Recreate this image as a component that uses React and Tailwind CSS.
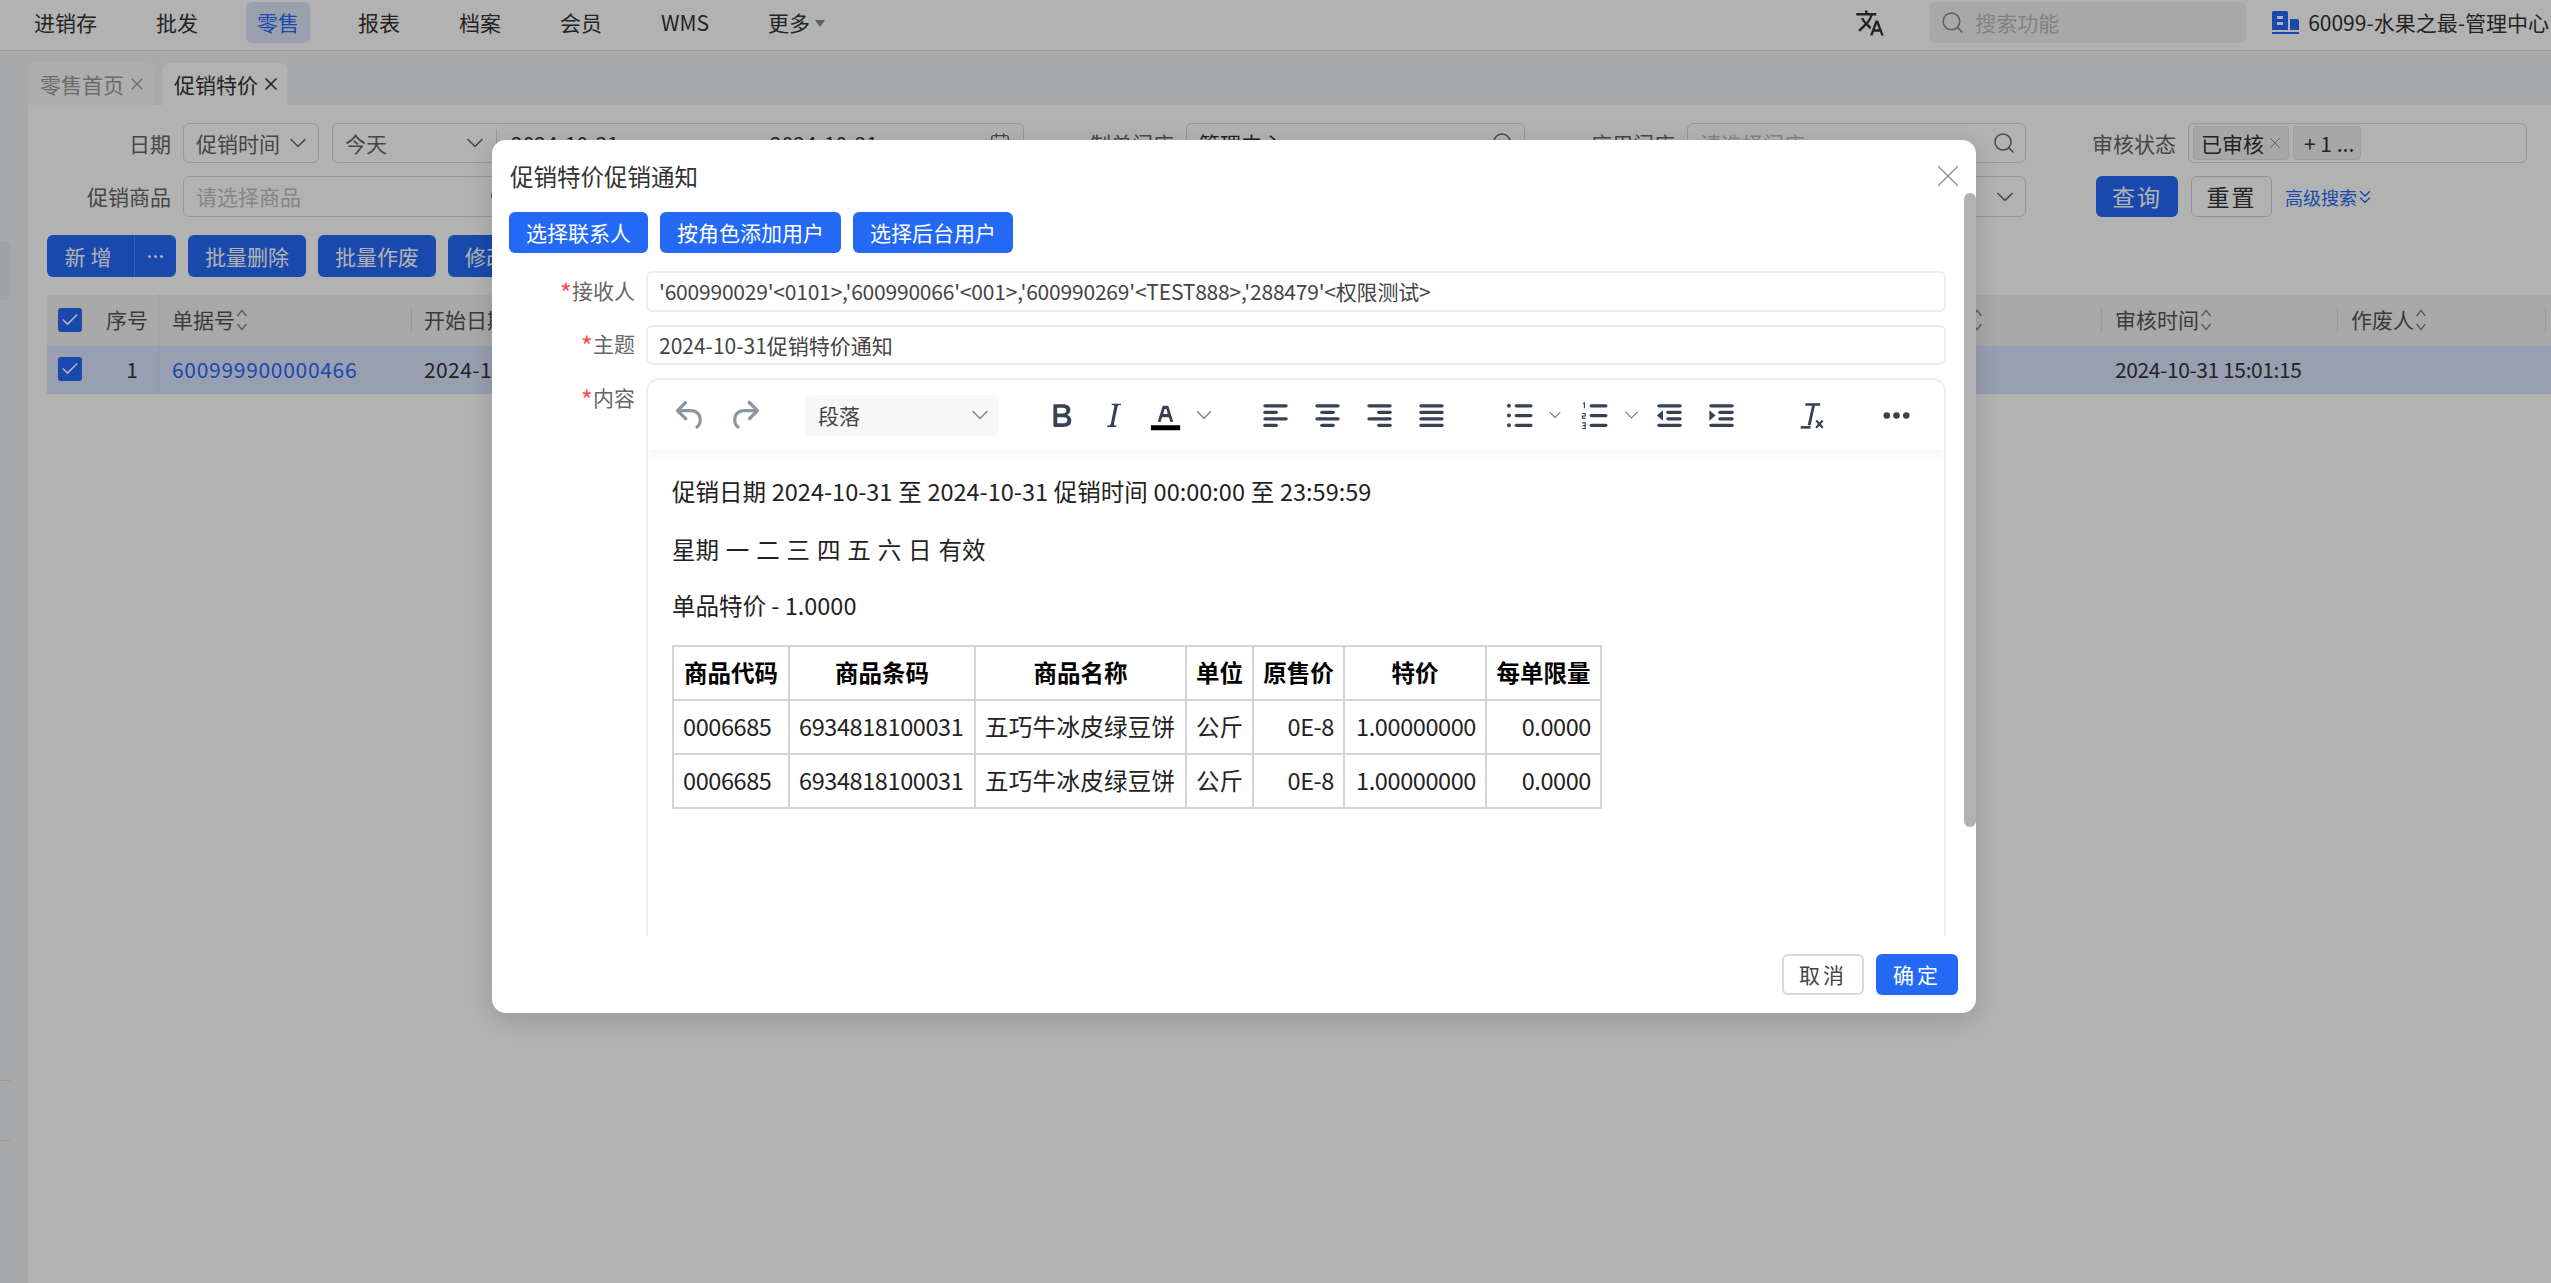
import React from 'react';
import { ChevronDown, Search, X, Check, Calendar, ChevronsDown } from 'lucide-react';
import { MdTranslate } from 'react-icons/md';

const navItems = ['进销存', '批发', '零售', '报表', '档案', '会员', 'WMS', '更多'];

const SortIcon = () => (
  <svg width="14" height="26" viewBox="0 0 14 26" fill="none" stroke="#8c8c8c" strokeWidth="1.6" className="shrink-0">
    <path d="M2.5 9 7 3.5 11.500 9" />
    <path d="M2.500 17 7 22.500 11.500 17" />
  </svg>
);

const CheckBox = () => (
  <span className="flex h-[24px] w-[24px] items-center justify-center rounded-[3px] bg-[#2469f6]">
    <Check size={20} strokeWidth={2} className="text-white" />
  </span>
);

const FilterLabel = ({ w, children }) => (
  <span className={`${w} mr-[12px] shrink-0 text-right text-[#666]`}>{children}</span>
);

const TinyIcon = ({ children, color = '#374151' }) => (
  <svg width="39" height="39" viewBox="0 0 24 24" fill={color}>{children}</svg>
);

const Tool = ({ className = 'w-[52px]', children }) => (
  <span className={`flex h-[41px] shrink-0 items-center justify-center ${className}`}>{children}</span>
);

const ToolChevron = ({ className }) => (
  <span className={`flex shrink-0 items-center justify-center ${className}`}>
    <ChevronDown size={28} strokeWidth={1.3} className="text-[#7b8490]" />
  </span>
);

const Lines = ({ rows }) => (
  <TinyIcon>
    {rows.map(([x, w], i) => (
      <rect key={i} x={x} y={5 + i * 4} width={w} height="2" rx="1" />
    ))}
  </TinyIcon>
);

const modalButtons = ['选择联系人', '按角色添加用户', '选择后台用户'];

const heads = ['商品代码', '商品条码', '商品名称', '单位', '原售价', '特价', '每单限量'];
const row = ['0006685', '6934818100031', '五巧牛冰皮绿豆饼', '公斤', '0E-8', '1.00000000', '0.0000'];
const cellStyle = [
  'text-left tracking-[-0.4px]',
  'text-left tracking-[-0.4px]',
  'text-left tracking-[0.3px]',
  'text-left',
  'text-right tracking-[-0.4px]',
  'text-right tracking-[-0.4px]',
  'text-right tracking-[-0.4px]',
];
const colWidths = ['w-[116px]', 'w-[186px]', 'w-[211px]', 'w-[67px]', 'w-[91px]', 'w-[142px]', 'w-[115px]'];

const FormLabel = ({ className = '', children }) => (
  <span className={`w-[143px] shrink-0 text-right text-[#666] ${className}`}>
    <span className="align-[-4px] text-[26px] leading-none text-[#ff4d4f]">*</span>
    {children}
  </span>
);

const App = () => {
  return (
    <div className="relative h-screen w-full overflow-hidden bg-white font-['Noto_Sans_CJK_SC','Noto_Sans',sans-serif] text-[21px] leading-none text-[#333]">
      {/* top bar */}
      <header className="flex h-[51px] items-center border-b border-[#dcdcdc] bg-white pb-[5px] pl-[23px]">
        <nav className="flex items-center gap-[37px]">
          {navItems.map((n) => (
            <span
              key={n}
              className={
                n === '零售'
                  ? 'flex h-[41px] items-center rounded-[6px] bg-[#dde6f8] px-[11px] text-[#2469f6]'
                  : 'flex h-[41px] items-center px-[11px]'
              }
            >
              {n}
              {n === '更多' && <span className="ml-[5px] mt-[1px] h-0 w-0 border-x-[5px] border-t-[7px] border-x-transparent border-t-[#888]" />}
            </span>
          ))}
        </nav>
        <div className="ml-auto flex items-center">
          <MdTranslate size={30} className="mr-[44px] text-[#333]" />
          <div className="flex h-[41px] w-[317px] items-center rounded-[6px] bg-[#f1f1f1] pl-[11px]">
            <Search size={25} strokeWidth={1.5} className="text-[#888]" />
            <span className="ml-[10px] text-[#bbb]">搜索功能</span>
          </div>
          <svg width="27" height="23" viewBox="0 0 27 23" className="ml-[26px]" fill="#2469f6">
            <path d="M0 1.500A1.500 1.500 0 0 1 1.500 0h13A1.500 1.500 0 0 1 16 1.500V19H0Z" />
            <path d="M18 8h7a2 2 0 0 1 2 2v9h-9Z" />
            <rect x="0" y="21" width="27" height="2" />
            <rect x="5" y="5" width="6" height="3" fill="#fff" />
            <rect x="5" y="11" width="6" height="3" fill="#fff" />
          </svg>
          <span className="ml-[9px] mr-[2px] whitespace-nowrap">60099-水果之最-管理中心</span>
        </div>
      </header>

      <div className="flex h-[1232px]">
        <aside className="flex w-[28px] shrink-0 flex-col bg-[#f0f2f5]">
          <div className="mt-[190px] h-[59px] w-[10px] rounded-r-[6px] bg-[#e6e8ec]" />
          <div className="mt-[780px] h-[1px] w-[10px] bg-[#dcdcdc]" />
          <div className="mt-[59px] h-[1px] w-[10px] bg-[#dcdcdc]" />
        </aside>

        <main className="flex min-w-0 flex-1 flex-col">
          {/* tabs */}
          <div className="flex h-[54px] shrink-0 items-end gap-[10px] bg-[#f0f2f5]">
            <div className="flex h-[42px] w-[125px] items-center rounded-t-[6px] bg-[#fafafa] pl-[12px] text-[#999]">
              零售首页<X size={20} strokeWidth={1.5} className="ml-[3px] shrink-0" />
            </div>
            <div className="flex h-[42px] w-[124px] items-center rounded-t-[6px] bg-white pl-[11px]">
              促销特价<X size={20} strokeWidth={2} className="ml-[3px] shrink-0" />
            </div>
          </div>

          {/* filters */}
          <div className="flex flex-col pt-[18px]">
            <div className="flex h-[40px] items-center">
              <FilterLabel w="w-[143px]">日期</FilterLabel>
              <div className="flex h-[40px] w-[136px] items-center justify-between rounded-[6px] border border-[#d9d9d9] pl-[12px] pr-[6px] text-[#666]">
                促销时间<ChevronDown size={28} strokeWidth={1.4} className="shrink-0" />
              </div>
              <div className="ml-[13px] flex h-[40px] w-[692px] items-center rounded-[6px] border border-[#d9d9d9]">
                <div className="flex h-[28px] w-[164px] items-center justify-between border-r border-[#d9d9d9] pl-[12px] pr-[7px] text-[#666]">
                  今天<ChevronDown size={28} strokeWidth={1.4} className="shrink-0" />
                </div>
                <span className="ml-[14px] w-[259px]">2024-10-31</span>
                <span>2024-10-31</span>
                <Calendar size={22} strokeWidth={1.5} className="ml-auto mr-[12px] text-[#666]" />
              </div>
              <FilterLabel w="w-[150px]">制单门店</FilterLabel>
              <div className="flex h-[40px] w-[339px] items-center justify-between rounded-[6px] border border-[#d9d9d9] pl-[12px] pr-[9px]">
                管理中心<Search size={24} strokeWidth={1.5} className="text-[#666]" />
              </div>
              <FilterLabel w="w-[150px]">应用门店</FilterLabel>
              <div className="flex h-[40px] w-[339px] items-center justify-between rounded-[6px] border border-[#d9d9d9] pl-[12px] pr-[9px] text-[#bfbfbf]">
                请选择门店<Search size={24} strokeWidth={1.5} className="text-[#666]" />
              </div>
              <FilterLabel w="w-[150px]">审核状态</FilterLabel>
              <div className="flex h-[40px] w-[339px] items-center gap-[4px] rounded-[6px] border border-[#d9d9d9] pl-[4px]">
                <span className="flex h-[34px] w-[96px] items-center rounded-[4px] border border-[#e3e3e3] bg-[#f0f0f0] pl-[7px]">
                  已审核<X size={18} strokeWidth={1.2} className="ml-[2px] shrink-0 text-[#888]" />
                </span>
                <span className="flex h-[34px] w-[68px] items-center whitespace-nowrap rounded-[4px] border border-[#e3e3e3] bg-[#f0f0f0] pl-[10px]">+ 1 ...</span>
              </div>
            </div>

            <div className="mt-[13px] flex h-[41px] items-center">
              <FilterLabel w="w-[143px]">促销商品</FilterLabel>
              <div className="flex h-[41px] w-[340px] items-center justify-between rounded-[6px] border border-[#d9d9d9] pl-[12px] pr-[9px] text-[#bfbfbf]">
                请选择商品<Search size={24} strokeWidth={1.5} className="text-[#666]" />
              </div>
              <div className="ml-[1164px] flex h-[41px] w-[339px] items-center justify-end rounded-[6px] border border-[#d9d9d9] pr-[6px]">
                <ChevronDown size={28} strokeWidth={1.4} className="text-[#666]" />
              </div>
              <button className="ml-[70px] h-[41px] w-[82px] rounded-[6px] bg-[#2469f6] text-[23px] tracking-[2px] text-white">查询</button>
              <button className="ml-[13px] h-[41px] w-[81px] rounded-[6px] border border-[#d0d0d0] text-[23px] tracking-[2px]">重置</button>
              <span className="ml-[13px] flex items-center text-[18px] text-[#2469f6]">
                高级搜索<ChevronsDown size={22} strokeWidth={1.5} className="-ml-[3px]" />
              </span>
            </div>

            {/* actions */}
            <div className="mt-[18px] flex h-[42px] items-center gap-[12px] pl-[19px]">
              <div className="flex h-[42px] w-[129px] shrink-0 items-center rounded-[6px] bg-[#2469f6] text-white">
                <span className="w-[87px] shrink-0 text-center tracking-[5px]">新增</span>
                <span className="flex h-full flex-1 items-center justify-center gap-[3px] border-l border-[#4d85f8]">
                  <span className="h-[3px] w-[3px] rounded-full bg-white" />
                  <span className="h-[3px] w-[3px] rounded-full bg-white" />
                  <span className="h-[3px] w-[3px] rounded-full bg-white" />
                </span>
              </div>
              <button className="h-[42px] w-[118px] rounded-[6px] bg-[#2469f6] text-white">批量删除</button>
              <button className="h-[42px] w-[118px] rounded-[6px] bg-[#2469f6] text-white">批量作废</button>
              <button className="h-[42px] w-[118px] rounded-[6px] bg-[#2469f6] pl-[17px] text-left text-white">修改</button>
            </div>

            {/* list table */}
            <div className="ml-[19px] mt-[18px] text-[#555]">
              <div className="flex h-[51px] items-center bg-[#f2f2f2] pb-[2px]">
                <div className="flex w-[47px] shrink-0 items-center pl-[11px]"><CheckBox /></div>
                <div className="flex h-[51px] w-[65px] shrink-0 items-center border-r border-[#e6e6e6] pl-[12px]">
                  序号
                </div>
                <div className="flex h-[26px] w-[253px] shrink-0 items-center border-r border-[#dcdcdc] pl-[13px]">
                  单据号<SortIcon />
                </div>
                <div className="flex h-[26px] w-[1690px] shrink-0 items-center border-r border-[#dcdcdc] pl-[12px]">
                  开始日期<SortIcon />
                  <span className="ml-auto mr-[117px]"><SortIcon /></span>
                </div>
                <div className="flex h-[26px] w-[236px] shrink-0 items-center border-r border-[#dcdcdc] pl-[13px]">
                  审核时间<SortIcon />
                </div>
                <div className="flex h-[26px] w-[208px] shrink-0 items-center border-r border-[#dcdcdc] pl-[13px]">
                  作废人<SortIcon />
                </div>
              </div>
              <div className="flex h-[48px] items-center bg-[#d9e4fe] pb-[2px] text-[#333]">
                <div className="flex w-[47px] shrink-0 items-center pl-[11px]"><CheckBox /></div>
                <div className="flex h-[48px] w-[65px] shrink-0 items-center justify-center border-r border-[#cfdaf3] pl-[12px]">1</div>
                <div className="w-[253px] shrink-0 pl-[13px] tracking-[0.7px] text-[#2469f6]">600999900000466</div>
                <div className="w-[1690px] shrink-0 pl-[12px] tracking-[0.4px]">2024-10-31</div>
                <div className="w-[236px] shrink-0 whitespace-nowrap pl-[13px] tracking-[-0.4px]">2024-10-31 15:01:15</div>
              </div>
            </div>
          </div>
        </main>
      </div>

      {/* mask */}
      <div className="absolute inset-0 bg-black/30" />

      {/* dialog */}
      <div className="absolute left-[492px] top-[140px] flex h-[873px] w-[1484px] flex-col rounded-[14px] bg-white shadow-[0_6px_24px_rgba(0,0,0,0.15)]">
        <div className="flex h-[72px] shrink-0 items-center justify-between pl-[18px] pr-[9px]">
          <span className="pt-[2px] text-[23.5px] text-[#333]">促销特价促销通知</span>
          <X size={38} strokeWidth={0.7} className="text-[#888]" />
        </div>

        <div className="flex h-[41px] shrink-0 gap-[12px] pl-[17px]">
          {modalButtons.map((b) => (
            <button key={b} className="h-[41px] rounded-[6px] bg-[#2469f6] px-[17px] text-white">{b}</button>
          ))}
        </div>

        <div className="mt-[18px] flex h-[41px] shrink-0 items-center">
          <FormLabel>接收人</FormLabel>
          <div className="ml-[11px] flex h-[41px] w-[1300px] items-center rounded-[6px] border-2 border-[#ececec] pl-[11px] tracking-[-0.2px] text-[#444]">
            '600990029'&lt;0101&gt;,'600990066'&lt;001&gt;,'600990269'&lt;TEST888&gt;,'288479'&lt;权限测试&gt;
          </div>
        </div>
        <div className="mt-[13px] flex h-[40px] shrink-0 items-center">
          <FormLabel>主题</FormLabel>
          <div className="ml-[11px] flex h-[40px] w-[1300px] items-center rounded-[6px] border-2 border-[#ececec] pl-[11px] text-[#444]">
            2024-10-31促销特价通知
          </div>
        </div>

        <div className="mt-[13px] flex h-[558px] shrink-0 items-start">
          <FormLabel className="pt-[8px]">内容</FormLabel>
          <div className="ml-[11px] h-full w-[1300px] overflow-hidden rounded-t-[14px] border-x-2 border-t-2 border-[#eeeeee]">
            <div className="flex h-[70px] items-center pl-[16px] shadow-[0_4px_8px_rgba(0,0,0,0.05)]">
              <Tool>
                <TinyIcon color="#8c96a3"><path d="M6.400 8H12c3.700 0 6.200 2 6.800 5.100.600 2.700-.400 5.600-2.300 6.800a1 1 0 0 1-1-1.800c1.100-.600 1.800-2.700 1.400-4.600-.500-2.100-2.100-3.500-4.900-3.500H6.400l3.300 3.300a1 1 0 1 1-1.400 1.400l-5-5a1 1 0 0 1 0-1.400l5-5a1 1 0 0 1 1.400 1.400L6.400 8Z" /></TinyIcon>
              </Tool>
              <Tool className="ml-[2px] w-[52px]">
                <TinyIcon color="#8c96a3"><path d="M17.600 10H12c-2.800 0-4.400 1.400-4.900 3.500-.400 2 .300 4 1.400 4.600a1 1 0 1 1-1 1.800c-2-1.200-2.900-4.100-2.300-6.800.600-3 3-5.100 6.800-5.100h5.600l-3.300-3.300a1 1 0 1 1 1.400-1.400l5 5a1 1 0 0 1 0 1.400l-5 5a1 1 0 0 1-1.400-1.400l3.300-3.300Z" /></TinyIcon>
              </Tool>
              <div className="ml-[35px] flex h-[41px] w-[194px] shrink-0 items-center justify-between rounded-[6px] bg-[#f7f7f7] pl-[13px] pr-[5px] text-[#444]">
                段落<ChevronDown size={28} strokeWidth={1.3} className="text-[#7b8490]" />
              </div>
              <Tool className="ml-[36px] w-[52px]">
                <TinyIcon><path d="M7.800 19c-.300 0-.500 0-.600-.200l-.200-.500V5.700c0-.200 0-.400.200-.500l.600-.200h5c1.500 0 2.700.300 3.500 1 .700.600 1.100 1.400 1.100 2.500a3 3 0 0 1-.600 1.900c-.400.600-1 1-1.600 1.200.400.100.900.300 1.300.600s.800.700 1 1.200c.400.400.500 1 .500 1.600 0 1.300-.400 2.300-1.300 3-.800.700-2.100 1-3.800 1H7.800Zm5-8.300c.600 0 1.200-.100 1.600-.500.400-.300.600-.700.600-1.300 0-1.100-.800-1.700-2.300-1.700H9.300v3.500h3.400Zm.500 6c.700 0 1.300-.100 1.700-.400.400-.400.600-.900.600-1.500s-.200-1-.700-1.400c-.400-.300-1-.400-2-.400H9.400v3.800h4Z" /></TinyIcon>
              </Tool>
              <Tool>
                <TinyIcon><path d="m16.700 4.700-.100.900h-.300c-.600 0-1 0-1.400.300-.300.300-.400.600-.500 1.100l-2.100 9.800v.600c0 .500.400.800 1.400.800h.200l-.200.800H8l.200-.800h.200c1.100 0 1.800-.500 2-1.500l2-9.800.100-.500c0-.600-.400-.800-1.400-.800h-.300l.200-.900h5.800Z" /></TinyIcon>
              </Tool>
              <Tool>
                <TinyIcon>
                  <path fill="#000" d="M3 18h18v3H3z" />
                  <path d="M8.700 16h-.800a.500.500 0 0 1-.500-.600l2.700-9c.100-.300.300-.400.500-.400h2.800c.200 0 .400.100.500.400l2.700 9a.500.500 0 0 1-.500.600h-.800a.500.500 0 0 1-.400-.400l-.700-2.200c0-.300-.300-.400-.500-.400h-3.400c-.200 0-.400.100-.500.400l-.700 2.200c0 .300-.200.400-.400.400Zm2.600-7.600-.600 2a.500.500 0 0 0 .500.600h1.600a.500.500 0 0 0 .500-.600l-.600-2c0-.300-.300-.400-.500-.400h-.400c-.200 0-.400.100-.500.400Z" />
                </TinyIcon>
              </Tool>
              <ToolChevron className="w-[26px]" />
              <Tool className="ml-[32px] w-[52px]"><Lines rows={[[4.500, 15], [4.500, 9], [4.500, 15], [4.500, 9]]} /></Tool>
              <Tool><Lines rows={[[4.500, 15], [7.500, 9], [4.500, 15], [7.500, 9]]} /></Tool>
              <Tool><Lines rows={[[4.500, 15], [10.500, 9], [4.500, 15], [10.500, 9]]} /></Tool>
              <Tool><Lines rows={[[4.500, 15], [4.500, 15], [4.500, 15], [4.500, 15]]} /></Tool>
              <Tool className="ml-[36px] w-[52px]">
                <TinyIcon>
                  <circle cx="5.500" cy="6" r="1.200" /><circle cx="5.500" cy="12" r="1.200" /><circle cx="5.500" cy="18" r="1.200" />
                  <rect x="9" y="5" width="11" height="2" rx="1" /><rect x="9" y="11" width="11" height="2" rx="1" /><rect x="9" y="17" width="11" height="2" rx="1" />
                </TinyIcon>
              </Tool>
              <ToolChevron className="w-[20px]" />
              <Tool className="ml-[3px] w-[52px]">
                <TinyIcon>
                  <path fill="none" stroke="#374151" strokeWidth="0.7" d="M5 4.800 5.800 4.300V7.500M4.500 10.800H6.300V12.300H4.500V13.600H6.500M4.500 16.500H6.300V20H4.500M4.800 18.200H6.300" />
                  <rect x="9" y="5" width="11" height="2" rx="1" /><rect x="9" y="11" width="11" height="2" rx="1" /><rect x="9" y="17" width="11" height="2" rx="1" />
                </TinyIcon>
              </Tool>
              <ToolChevron className="w-[23px]" />
              <Tool>
                <TinyIcon>
                  <rect x="4.500" y="5" width="15" height="2" rx="1" /><rect x="10" y="9" width="9.500" height="2" rx="1" /><rect x="10" y="13" width="9.500" height="2" rx="1" /><rect x="4.500" y="17" width="15" height="2" rx="1" />
                  <path d="M8 8.800v6.400L4.200 12Z" />
                </TinyIcon>
              </Tool>
              <Tool>
                <TinyIcon>
                  <rect x="4.500" y="5" width="15" height="2" rx="1" /><rect x="10" y="9" width="9.500" height="2" rx="1" /><rect x="10" y="13" width="9.500" height="2" rx="1" /><rect x="4.500" y="17" width="15" height="2" rx="1" />
                  <path d="M4.500 8.800v6.400L8.300 12Z" />
                </TinyIcon>
              </Tool>
              <Tool className="ml-[37px] w-[52px]">
                <TinyIcon>
                  <path d="M9 4.500h9v1.500h-3.300l-2.600 12h-1.800l2.600-12H8.700Z" />
                  <rect x="6" y="18.500" width="6" height="1.600" />
                  <path d="m15 15.500 1-.9 1.500 1.700 1.500-1.700 1 .9-1.600 1.800 1.600 1.800-1 .9-1.500-1.700-1.500 1.700-1-.9 1.600-1.800Z" />
                </TinyIcon>
              </Tool>
              <Tool className="ml-[34px] w-[52px]">
                <TinyIcon>
                  <circle cx="6" cy="12" r="2" /><circle cx="12" cy="12" r="2" /><circle cx="18" cy="12" r="2" />
                </TinyIcon>
              </Tool>
            </div>

            <div className="pl-[24px] pt-[30px] text-[23.5px] text-[#222]">
              <p className="h-[58px] [word-spacing:0.5px]">促销日期 2024-10-31 至 2024-10-31 促销时间 00:00:00 至 23:59:59</p>
              <p className="h-[56px] [word-spacing:1.6px]">星期 一 二 三 四 五 六 日 有效</p>
              <p className="h-[51px]">单品特价 - 1.0000</p>
              <table className="w-[928px] table-fixed border-collapse">
                <colgroup>
                  {colWidths.map((w) => <col key={w} className={w} />)}
                </colgroup>
                <thead>
                  <tr className="h-[54px]">
                    {heads.map((h) => (
                      <th key={h} className="whitespace-nowrap border-2 border-[#d4d4d4] px-[7px] text-center font-bold text-black">{h}</th>
                    ))}
                  </tr>
                </thead>
                <tbody>
                  {[0, 1].map((k) => (
                    <tr key={k} className="h-[54px]">
                      {row.map((c, i) => (
                        <td key={i} className={`whitespace-nowrap border-2 border-[#d4d4d4] px-[9px] ${cellStyle[i]}`}>{c}</td>
                      ))}
                    </tr>
                  ))}
                </tbody>
              </table>
            </div>
          </div>
        </div>

        <div className="mt-[18px] flex justify-end gap-[12px] pr-[18px]">
          <button className="h-[41px] w-[82px] rounded-[6px] border-2 border-[#d9d9d9] tracking-[3px] text-[#444]">取消</button>
          <button className="h-[41px] w-[82px] rounded-[6px] bg-[#2469f6] tracking-[3px] text-white">确定</button>
        </div>

        {/* scrollbar */}
        <div className="absolute left-[1472px] top-[53px] h-[634px] w-[12px] rounded-t-[8px] rounded-b-[8px] bg-[#b2b2b2]" />
      </div>
    </div>
  );
};

export default App;
